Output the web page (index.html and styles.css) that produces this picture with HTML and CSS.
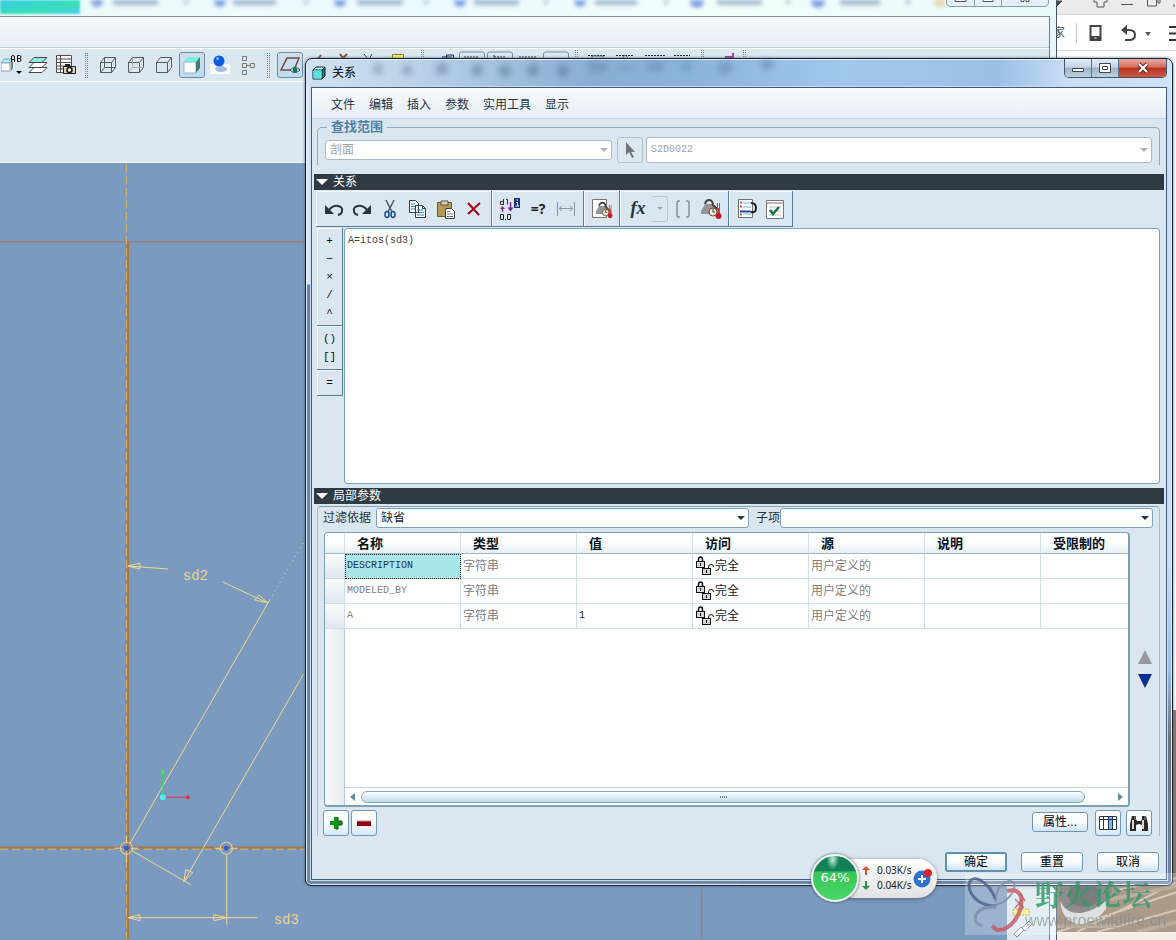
FILE: index.html
```html
<!DOCTYPE html>
<html lang="zh-CN">
<head>
<meta charset="utf-8">
<title>关系</title>
<link rel="stylesheet" href="styles.css">
</head>
<body>
<svg class="defs" aria-hidden="true">
  <symbol id="locks" viewBox="0 0 20 20">
    <g fill="none" stroke="#111">
      <path d="M3.500 6V3.500Q3.500 1 5.500 1Q7.500 1 7.500 3.500V6" stroke-width="1.500"/>
      <rect x="1.500" y="5.500" width="8" height="6" fill="#d5d5d5"/>
      <path d="M5.500 7v3M13.500 13v-2Q13.500 8.500 16 8.500Q18.500 8.500 18.500 11"/>
      <rect x="7.500" y="12.500" width="8" height="6" fill="#d5d5d5"/>
      <path d="M11.500 14v3"/>
    </g>
  </symbol>
  <symbol id="weight" viewBox="0 0 22 22">
    <path d="M1 13l4-7h7l4 7-2 3H1z" fill="#92969a"/>
    <path d="M5 6Q6 2 9 2t4 4" fill="none" stroke="#3c3c3c" stroke-width="2"/>
    <path d="M12 6l4 4v3" stroke="#5a3a26" stroke-width="2" fill="none"/>
    <circle cx="13" cy="14" r="4" fill="#f4ecd4" stroke="#6b4a35"/>
    <path d="M13 11v3h2" stroke="#333" fill="none"/>
    <path d="M18.500 5v12" stroke="#b34a4a" stroke-width="3"/><path d="M18.500 5v5" stroke="#fff"/>
    <circle cx="18.500" cy="18" r="3" fill="#c21d22"/>
  </symbol>
</svg>
<main class="desktop">

  <section class="app">
    <header class="app-title">
      <span class="app-accent"></span>
      <svg class="app-tabs" width="970" height="16" viewBox="0 0 970 16" aria-hidden="true">
        <g fill="#5279dd"><circle cx="17" cy="1" r="6"/><circle cx="140" cy="1" r="6"/><circle cx="260" cy="1" r="6"/><circle cx="380" cy="1" r="6"/><circle cx="500" cy="1" r="6"/><circle cx="617" cy="1" r="7"/><circle cx="738" cy="1" r="7"/><circle cx="860" cy="1" r="6" fill="#ebc078"/></g>
        <g fill="#7f99b8"><path d="M33 0h45v5H33zM153 0h43v5h-43zM277 0h46v5h-46zM394 0h45v5h-45zM515 0h42v5h-42zM637 0h45v5h-45zM760 0h40v5h-40zM104 0h4v4h-4zM224 0h4v4h-4zM344 0h4v4h-4zM464 0h4v4h-4zM584 0h4v4h-4zM706 0h4v4h-4zM826 0h4v4h-4z"/></g>
      </svg>
      <svg class="app-controls" width="104" height="8" viewBox="0 0 104 8" aria-hidden="true">
        <path d="M.5 0v2Q.5 6.500 5 6.500H98Q102.500 6.500 102.500 2V0M28.500 0v6M55.500 0v6" fill="#e3eff9" stroke="#8a9db3"/>
        <path d="M9 0v1.500h11V0M37 0v1.500h10V0M75 0v1.500h3V0M80 0v1.500h3V0" fill="#fff" stroke="#555"/>
      </svg>
    </header>
    <div class="app-frame">
      <div class="app-menu"></div>
      <div class="app-tools">
        <button class="tool tool-first" aria-label="注释"><svg width="22" height="22" viewBox="0 0 22 22"><path d="M0 9l3-4h8l-2 4z" fill="#9ff" stroke="#999"/><path d="M0 9h9v8H0z" fill="#fff" stroke="#99a"/><path d="M10 9l2-3v8l-2 3z" fill="#688"/><path d="M10.500 8V3q0-1.500 1.500-1.500T13.500 3v5M10.500 5.500h3M16.500 1.500v6h2q1.500 0 1.500-1.500t-1.500-1.500h-2 2q1.500 0 1.500-1.500t-1.500-1.500z" fill="none" stroke="#111"/><path d="M15 17h6l-3 3z" fill="#111"/></svg></button>
        <button class="tool" aria-label="层"><svg width="20" height="20" viewBox="0 0 20 20" fill="#fff" stroke="#444"><path d="M1 17.500l5-5h13l-5 5z"/><path d="M1 12.500l5-5h13l-5 5z"/><path d="M1 7.500l5-5h13l-5 5z" fill="#8fe9e4"/></svg></button>
        <button class="tool" aria-label="快照"><svg width="22" height="22" viewBox="0 0 22 22"><path d="M1.500 1.500h15v17h-15zM1.500 5h15M1.500 8.500h15M1.500 12h15M1.500 15h15M5.500 1.500v17" fill="#fff" stroke="#554848"/><path d="M8.500 12.500h12v7h-12z" fill="#ddd3b8" stroke="#222"/><path d="M10 10h5v2h-5z" fill="#222"/><circle cx="14.500" cy="16" r="2.500" fill="#fff" stroke="#111" stroke-width="1.500"/></svg></button>
        <span class="grip"></span>
        <button class="tool" aria-label="线框"><svg width="18" height="18" viewBox="0 0 18 18" fill="none" stroke="#555a60"><path d="M1.500 6.500h11v10h-11zM1.500 6.500l4-5h11v10l-4 5M12.500 6.500l4-5M5.500 1.500v10h11M5.500 11.500l-4 5"/></svg></button>
        <button class="tool" aria-label="隐藏线"><svg width="18" height="18" viewBox="0 0 18 18" fill="none" stroke="#555a60"><path d="M1.500 6.500h11v10h-11zM1.500 6.500l4-5h11v10l-4 5M12.500 6.500l4-5"/><path d="M5.500 1.500v10h11M5.500 11.500l-4 5" stroke="#aaa"/></svg></button>
        <button class="tool" aria-label="消隐"><svg width="18" height="18" viewBox="0 0 18 18" fill="none" stroke="#555a60"><path d="M1.500 6.500h11v10h-11zM1.500 6.500l4-5h11v10l-4 5M12.500 6.500l4-5"/></svg></button>
        <button class="tool on" aria-label="着色"><svg width="18" height="18" viewBox="0 0 18 18"><path d="M1 6l4-5h12l-4 5z" fill="#72eee3"/><path d="M1 6h12v11H1z" fill="#fcffff" stroke="#9bb"/><path d="M13 6l4-5v11l-4 5z" fill="#477773"/></svg></button>
        <button class="tool" aria-label="外观"><svg width="22" height="22" viewBox="0 0 22 22"><path d="M1 10h20v10H1z" fill="#fafdff"/><ellipse cx="12" cy="15" rx="6" ry="3" fill="#a9bce0"/><circle cx="10" cy="7" r="5.500" fill="#0b5ce0"/><circle cx="8.500" cy="4.500" r="1.500" fill="#7db8ff"/></svg></button>
        <button class="tool" aria-label="模型树"><svg width="18" height="20" viewBox="0 0 18 20" fill="none" stroke="#777"><path d="M3.500 1.500h4v4h-4zM3.500 8.500h4v4h-4zM3.500 15.500h4v4h-4zM11.500 8.500h4v4h-4zM8 10.500h3"/></svg></button>
        <span class="grip"></span>
        <button class="tool on" aria-label="基准平面"><svg width="22" height="22" viewBox="0 0 22 22"><path d="M2 16L8 4h12l-5 12z" fill="none" stroke="#70493e" stroke-width="1.500"/><path d="M11 16q5-5 10 0-5 5-10 0z" fill="#fff" stroke="#444"/><circle cx="16" cy="16" r="2.500" fill="#087a70"/></svg></button>
        <svg class="tool-rest" width="480" height="20" viewBox="304 50 480 20" fill="none" stroke="#333" aria-hidden="true">
          <path d="M317 60l4-5M340 54l3 4 4-4" stroke="#8a4a32" stroke-width="2"/><path d="M364 54l4 5M372 54l-3 5"/><path d="M392.500 60v-5.500h11V60" fill="#ffef6b" stroke="#877b22"/>
          <path d="M421.500 50v20M423.500 50v20M575.500 50v20M577.500 50v20M701.500 50v20M703.500 50v20M743.500 50v20M745.500 50v20" stroke="#7a8a9a" stroke-dasharray="1 1"/>
          <path d="M446.500 60v-5h7v5M442 57h10" stroke="#10205f"/>
          <path d="M459.500 62v-8q0-2 2-2h21q2 0 2 2v8M487.500 62v-8q0-2 2-2h21q2 0 2 2v8M543.500 62v-8q0-2 2-2h21q2 0 2 2v8" stroke="#778b9e"/>
          <path d="M464 57h14M494 55v4M494 57h12M519 57h17M588 55.500h18M616 55.500h17M645 55.500h20M674 55.500h16" stroke="#223" stroke-dasharray="2 1"/>
          <path d="M592 60v-4h11v4M621 60l4-5 5 5" stroke="#55666f"/><path d="M725 57h8M733 53v5" stroke="#b137a7" stroke-width="2"/>
        </svg>
      </div>
      <div class="app-panel"></div>
      <div class="app-view">
        <svg class="drawing" width="1008" height="776" viewBox="0 163 1008 776" role="img" aria-label="草绘">
          <g fill="none">
            <path d="M0 241.500H1008M702.500 241V940" stroke="#a5745c"/>
            <path d="M0 848.500H1008M127 241V940" stroke="#8f8480" stroke-width="3"/>
            <path d="M0 847.500H1008M128.500 241V940" stroke="#a9713a"/>
            <path d="M0 849.500H1008M126.500 164V940" stroke="#e3b45c" stroke-dasharray="8 4"/>
            <g stroke="#f2d98b">
              <path d="M130 844L270 600M304 674L184 882M132 851L191 885M227 855V925M128 918H258M128 566L168 569M223 582L268 603"/>
              <path d="M270 600L304 542" stroke-dasharray="1 4"/>
              <path d="M140 563l-12 3 12 3zM259 595l9 8-13-3zM186 870l-2 12 9-9zM140 915l-12 3 12 3zM214 915l13 3-13 3z"/>
              <circle cx="126.500" cy="848.500" r="6"/><circle cx="226.500" cy="848.500" r="6"/>
              <path d="M115 848.500h7M131 848.500h7M126.500 836v7M126.500 853v10M215 848.500h7M231 848.500h7"/>
            </g>
            <path d="M163 797V773" stroke="#35df55"/><path d="M163 797.500h25" stroke="#dd3344"/>
          </g>
          <circle cx="126.500" cy="848.500" r="2.500" fill="#315bd0"/><circle cx="226.500" cy="848.500" r="2.500" fill="#315bd0"/>
          <circle cx="163" cy="772" r="2" fill="#39e95a"/><circle cx="188" cy="797.500" r="2" fill="#ea3344"/><circle cx="163" cy="797.500" r="3" fill="#55effa"/>
          <text x="183" y="580" class="dim">sd2</text><text x="274" y="924" class="dim">sd3</text>
        </svg>
        <aside class="app-side"><svg width="42" height="56" viewBox="0 0 42 56" aria-hidden="true"><path d="M8 15l9 9M16 15l-8 9M13 9l5 8" stroke="#a44c42" stroke-width="1.500" fill="none"/><path d="M6 25h16v6H6z" fill="#ffed80" stroke="#ad933a" stroke-dasharray="2 1"/><path d="M7 50l7-7 3 3-7 7zM15 44l7-7 3 3-7 7z" fill="#fff" stroke="#7d888f"/></svg></aside>
      </div>
    </div>
  </section>

  <section class="browser">
    <div class="browser-top"><svg width="118" height="15" viewBox="0 0 118 15" fill="none" stroke="#555" aria-hidden="true"><path d="M0 1h5l-5 5" fill="#444"/><path d="M37 0v2h3v5h7V2h3V0M64 4.500h12M90.500 0v6h9V0M101 0v3h2V0M117 4v3"/></svg></div>
    <div class="browser-bar"><span>家</span><i></i><svg width="90" height="22" viewBox="0 0 90 22" fill="none" aria-hidden="true"><path d="M4.500 4h10v14h-10z" stroke="#444" stroke-width="2"/><path d="M4 15.500h11" stroke="#444" stroke-width="3"/><path d="M8.500 16h2" stroke="#fff"/><path d="M37 8h6q6 0 6 5t-6 5h-4" stroke="#444" stroke-width="2"/><path d="M41 3l-6 5 6 5z" fill="#444"/><path d="M59 10h6l-3 4z" fill="#555"/><path d="M83 5h8M83 11.500h8M83 18h8" stroke="#333" stroke-width="2"/></svg></div>
    <div class="browser-page"></div>
    <div class="photo"><svg width="120" height="222" viewBox="0 0 120 222" aria-hidden="true"><path d="M0 0h120v222H0z" fill="#8f7963"/><path d="M20 222L120 172M0 222L120 182M40 222l80-22M60 180l60-12" stroke="#c9b8a1" stroke-width="2"/><path d="M80 222l40-10M50 190l70-14M0 216h60" stroke="#a6927b" stroke-width="4"/><path d="M2 172h54l-3 20q-10 20-28 20Q6 208 2 192z" fill="#6a6866"/><path d="M3 190q5 14 21 13 14-2 27-14l-2 10q-12 15-27 15Q5 212 3 190z" fill="#d5d7d7"/><ellipse cx="27" cy="185" rx="16" ry="12" fill="#4e5156"/></svg></div>
    <div class="browser-foot"></div>
  </section>

  <section class="dialog" role="dialog" aria-labelledby="dlg-title">
    <header class="titlebar">
      <svg class="title-blur" width="500" height="28" viewBox="310 60 500 28" aria-hidden="true"><g fill="#34506e" opacity=".6"><circle cx="377" cy="69" r="5"/><circle cx="406" cy="70" r="5"/><circle cx="441" cy="69" r="6"/><circle cx="476" cy="70" r="6"/><circle cx="504" cy="71" r="6"/><circle cx="532" cy="70" r="6"/><circle cx="562" cy="71" r="6"/><path d="M588 62h18v10h-18zM616 66h16v3h-16zM646 62h16v9h-16z" opacity=".6"/><circle cx="685" cy="67" r="5" fill="#2f9173"/><circle cx="724" cy="68" r="7" opacity=".7"/><circle cx="766" cy="63" r="6"/></g></svg>
      <svg class="title-icon" width="14" height="14" viewBox="0 0 14 14"><path d="M1 4l3-3h9l-3 3z" fill="#aff"/><path d="M10 4l3-3v9l-3 3z" fill="#087"/><path d="M1 4h9v9H1zM1 4l3-3h9v9l-3 3M10 4l3-3" fill="none" stroke="#123"/><path d="M1.500 4.500h8v8h-8z" fill="#59e4df"/></svg>
      <h1 id="dlg-title">关系</h1>
      <div class="win-controls">
        <button class="win" aria-label="最小化"><svg width="14" height="12" viewBox="0 0 14 12"><path d="M1.500 6.500h11v3h-11z" fill="#fff" stroke="#445"/></svg></button>
        <button class="win" aria-label="最大化"><svg width="14" height="12" viewBox="0 0 14 12"><path d="M1.500 1.500h11v9h-11zM4.500 4.500h5v3h-5z" fill="#fff" stroke="#445"/></svg></button>
        <button class="win close" aria-label="关闭"><svg width="14" height="12" viewBox="0 0 14 12"><path d="M3 2l8 8M11 2l-8 8" stroke="#5a2828" stroke-width="4"/><path d="M3 2l8 8M11 2l-8 8" stroke="#fff" stroke-width="2"/></svg></button>
      </div>
    </header>

    <div class="body">
      <nav class="menubar">
        <button>文件</button><button>编辑</button><button>插入</button><button>参数</button><button>实用工具</button><button>显示</button>
      </nav>

      <fieldset class="scope">
        <legend>查找范围</legend>
        <div class="scope-row">
          <span class="combo scope-type off"><select aria-label="对象类型" disabled><option>剖面</option></select></span>
          <button class="square off" aria-label="选取"><svg width="14" height="18" viewBox="0 0 14 18"><path d="M3 1v13l3-3 3 6 2-1-3-5h4z" fill="#6e7378"/></svg></button>
          <span class="combo scope-name off"><select class="mono" aria-label="对象名称" disabled><option>S2D0022</option></select></span>
        </div>
      </fieldset>

      <h2 class="bar"><span class="tri"></span>关系</h2>
      <div class="tools">
        <div class="group">
          <button aria-label="撤消"><svg width="20" height="18" viewBox="0 0 20 18"><path d="M5 10q4-5 9-4t4 5q0 3-4 4" fill="none" stroke="#2d3338" stroke-width="2"/><path d="M1 5v9h9z" fill="#2d3338"/></svg></button>
          <button aria-label="重做"><svg width="20" height="18" viewBox="0 0 20 18"><path d="M15 10q-4-5-9-4t-4 5q0 3 4 4" fill="none" stroke="#2d3338" stroke-width="2"/><path d="M19 5v9h-9z" fill="#2d3338"/></svg></button>
          <button aria-label="剪切"><svg width="20" height="20" viewBox="0 0 20 20" fill="none" stroke-width="1.500"><path d="M6 1l6 12M14 1L8 13" stroke="#555"/><ellipse cx="7" cy="15.500" rx="2" ry="3" stroke="#17468c"/><ellipse cx="13" cy="15.500" rx="2" ry="3" stroke="#17468c"/></svg></button>
          <button aria-label="复制"><svg width="20" height="20" viewBox="0 0 20 20"><path d="M1.500 1.500h6l3 3v9h-9zM7.500 6.500h7l3 3v9h-10z" fill="#fff" stroke="#2b3d54"/><path d="M3 5h4M3 7.500h4M3 10h4M9 11h6M9 13.500h7M9 16h7" stroke="#357baf"/><path d="M14.500 6.500v3h3" fill="none" stroke="#2b3d54"/></svg></button>
          <button aria-label="粘贴"><svg width="20" height="20" viewBox="0 0 20 20"><path d="M1.500 3.500h14v14h-14z" fill="#b69a5a" stroke="#6d5a35"/><path d="M5 2h7v4H5z" fill="#d7d3b2" stroke="#555"/><path d="M9.500 9.500h6l3 3v7h-9z" fill="#fff" stroke="#444"/><path d="M11 12.500h3M11 15h6M11 17.500h6" stroke="#777"/></svg></button>
          <button aria-label="删除"><svg width="18" height="18" viewBox="0 0 18 18"><path d="M3 3l11 12M15 3L3 14" fill="none" stroke="#a50019" stroke-width="2"/></svg></button>
        </div>
        <div class="group">
          <button aria-label="切换尺寸"><svg width="24" height="24" viewBox="0 0 24 24" fill="none"><path d="M5.500 2v6M5.500 4.500h-3v3h3M8 2.500h1.500v5" stroke="#333"/><path d="M4.500 11v4M12.500 5v7" stroke="#82239d" stroke-width="1.500"/><path d="M2 12l2.500-3L7 12zM9.500 10.500l3 4 3-4z" fill="#82239d"/><path d="M16 1h6v10h-6z" fill="#1b327c"/><path d="M18 5.500h1.500v3M17.500 9h3.500M18.500 3h1.500" stroke="#fff"/><path d="M2.500 17.500h3v5h-3zM7 22.500h1M9.500 17.500h3v5h-3z" stroke="#222"/></svg></button>
          <button class="eval" aria-label="计算">=?</button>
          <button aria-label="尺寸"><svg width="20" height="18" viewBox="0 0 20 18" fill="none" stroke="#8a959d"><path d="M1.500 2v14M18.500 2v14M3 8.500h14M6 6L3 8.500 6 11M14 6l3 2.500-3 2.500"/></svg></button>
        </div>
        <div class="group">
          <button aria-label="设置单位"><svg width="22" height="22" viewBox="0 0 22 22"><path d="M1.500 1.500h14v18h-14z" fill="#fff" stroke="#777"/></svg><svg class="stacked" width="18" height="18"><use href="#weight"/></svg></button>
        </div>
        <div class="group">
          <button class="fx" aria-label="函数">fx</button>
          <button class="drop" aria-label="函数列表"></button>
          <button aria-label="括号"><svg width="18" height="20" viewBox="0 0 18 20" fill="none" stroke="#84929b" stroke-width="1.500"><path d="M6 2H4.500Q3 2 3 4v12q0 2 1.500 2H6M12 2h1.500Q15 2 15 4v12q0 2-1.500 2H12"/></svg></button>
          <button aria-label="单位"><svg width="22" height="22"><use href="#weight"/></svg></button>
        </div>
        <div class="group">
          <button aria-label="排序"><svg width="22" height="22" viewBox="0 0 22 22"><path d="M2.500 1.500h14v18h-14z" fill="#fff" stroke="#68717d"/><path d="M7 5h8M7 9h8M7 16h8" stroke="#79aee0"/><path d="M4 4.500h2M4 8.500h2M4 16.500h2" stroke="#d65332" stroke-width="2"/><path d="M4 13.500h11" stroke="#1c488f" stroke-width="2"/><path d="M15 5q5 0 5 5t-5 4" fill="none" stroke="#222" stroke-width="2"/></svg></button>
          <button aria-label="校验"><svg width="20" height="20" viewBox="0 0 20 20"><path d="M1.500 1.500h17v18h-17z" fill="#fff" stroke="#777"/><path d="M2 4h16" stroke="#9a6073"/><path d="M4 8h12M4 12h12M4 16h12" stroke="#b6c2c8"/><path d="M5 11l3 4 6-7" fill="none" stroke="#1a7340" stroke-width="2.500"/></svg></button>
        </div>
      </div>

      <div class="editor">
        <div class="ops">
          <div><button>+</button><button>−</button><button>×</button><button>/</button><button>^</button></div>
          <div><button>()</button><button>[]</button></div>
          <div><button>=</button></div>
        </div>
        <textarea class="mono" aria-label="关系式" spellcheck="false">A=itos(sd3)</textarea>
      </div>

      <h2 class="bar"><span class="tri"></span>局部参数</h2>
      <div class="params">
        <div class="filter">
          <label for="filter-by">过滤依据</label>
          <span class="combo"><select id="filter-by"><option>缺省</option></select></span>
          <label for="sub-item" class="sub">子项</label>
          <span class="combo"><select id="sub-item"><option></option></select></span>
        </div>
        <div class="grid-row">
          <div class="grid">
            <div class="grid-body">
              <table>
                <colgroup><col class="c-head"><col class="c"><col class="c"><col class="c"><col class="c"><col class="c"><col class="c"><col></colgroup>
                <thead><tr><th></th><th>名称</th><th>类型</th><th>值</th><th>访问</th><th>源</th><th>说明</th><th>受限制的</th></tr></thead>
                <tbody>
                  <tr><td></td><td class="mono selected">DESCRIPTION</td><td>字符串</td><td class="mono val"></td><td class="access"><svg width="20" height="20"><use href="#locks"/></svg>完全</td><td>用户定义的</td><td></td><td></td></tr>
                  <tr><td></td><td class="mono">MODELED_BY</td><td>字符串</td><td class="mono val"></td><td class="access"><svg width="20" height="20"><use href="#locks"/></svg>完全</td><td>用户定义的</td><td></td><td></td></tr>
                  <tr><td></td><td class="mono">A</td><td>字符串</td><td class="mono val">1</td><td class="access"><svg width="20" height="20"><use href="#locks"/></svg>完全</td><td>用户定义的</td><td></td><td></td></tr>
                </tbody>
              </table>
            </div>
            <div class="hscroll"><span class="arrow left"></span><span class="thumb"><i></i></span><span class="arrow right"></span></div>
          </div>
          <div class="reorder">
            <button aria-label="上移"><svg width="14" height="14" viewBox="0 0 14 14"><path d="M7 0l7 14H0z" fill="#949a9f"/></svg></button>
            <button aria-label="下移"><svg width="14" height="14" viewBox="0 0 14 14"><path d="M0 0h14L7 14z" fill="#0a2f91"/></svg></button>
          </div>
        </div>
        <div class="grid-actions">
          <button class="square" aria-label="添加参数"><svg width="14" height="14" viewBox="0 0 14 14"><path d="M5 1h4v4h4v4H9v4H5V9H1V5h4z" fill="#0c9413"/><path d="M9 1v4h4v4H9v4H7" fill="none" stroke="#075b12"/></svg></button>
          <button class="square" aria-label="删除参数"><svg width="14" height="14" viewBox="0 0 14 14"><path d="M0 5h14v5H0z" fill="#91000d"/><path d="M0 5h14" stroke="#d68a92"/></svg></button>
          <button class="push props">属性...</button>
          <button class="square cols" aria-label="列"><svg width="18" height="16" viewBox="0 0 18 16"><path d="M.5 1.500h17v13H.5z" fill="#fff"/><path d="M9 2h5v12H9z" fill="#73baf0"/><path d="M.5 1.500h17v13H.5zM.5 4.500h17M4.500 1.500v13M9.500 1.500v13M13.500 1.500v13" fill="none" stroke="#273451"/></svg></button>
          <button class="square" aria-label="查找"><svg width="20" height="18" viewBox="0 0 20 18"><path d="M3 2h4v3l1 2h4l1-2V2h4l2 8v7h-6v-6l-3-1-3 1v6H1v-7z" fill="#2a2726"/><path d="M4 6v9M14 6v9" stroke="#d8d8d8" stroke-width="2"/><path d="M6 2v4M16 2v4" stroke="#888"/></svg></button>
        </div>
      </div>
      <footer class="actions">
        <button class="push primary">确定</button><button class="push">重置</button><button class="push">取消</button>
      </footer>
    </div>
  </section>

  <div class="watermark">
    <svg width="80" height="60" viewBox="0 0 80 60" fill="none" aria-hidden="true"><path d="M31 27Q25 12 15 7 5 3 4 12q0 9 9 16 8 5 18 5" stroke="#4b5f89" stroke-width="3"/><path d="M31 30Q30 12 44 8q9 0 3 12-5 9-16 12" stroke="#7d8cab" stroke-width="2"/><path d="M31 34q-13-1-19 6-5 10 5 13" stroke="#7d8cab" stroke-width="3"/><path d="M42 18q11-3 14 6 2 12-6 23-8 11-18 10l-5-4" stroke="#c65565" stroke-width="4"/></svg>
    <div class="wm-text"><strong>野火论坛</strong><span>www.proewildfire.cn</span></div>
  </div>

  <div class="monitor">
    <div class="orb">64%</div>
    <div class="rates">
      <p><svg width="8" height="10" viewBox="0 0 8 10"><path d="M4 0L0 4h3v5h2V4h3z" fill="#d8542c"/></svg>0.03K/s</p>
      <p><svg width="8" height="10" viewBox="0 0 8 10"><path d="M4 9L0 5h3V0h2v5h3z" fill="#25934c"/></svg>0.04K/s</p>
    </div>
    <button class="boost" aria-label="加速"><svg width="20" height="20" viewBox="0 0 20 20"><circle cx="9" cy="11" r="8.500" fill="#2c72cf"/><path d="M9 7v8M5 11h8" stroke="#fff" stroke-width="2"/><circle cx="15" cy="5" r="4" fill="#d7282f"/></svg></button>
  </div>
</main>
</body>
</html>
```
FILE: styles.css
```css
* { box-sizing: border-box; }
body { margin: 0; font: 12px/16px "Liberation Sans", "Noto Sans CJK SC", sans-serif; color: #26323c; }
button, select, textarea { font: inherit; color: inherit; margin: 0; }
button { padding: 0; border: 0; background: none; display: flex; align-items: center; justify-content: center; }
h1, h2, p { margin: 0; font-size: 12px; font-weight: normal; }
svg { flex: none; }
.defs { display: none; }
.desktop { position: relative; height: 100vh; min-height: 760px; overflow: hidden; background: #fff; }

/* background application */
.app { position: absolute; inset: 0 119px 0 0; display: flex; flex-direction: column; background: #e9f5fc; border-right: 1px solid #46535f; }
.app-title { display: flex; height: 16px; flex: none; overflow: hidden; background: linear-gradient(90deg, #eefafa, #eafbff 40%, #f2fffb 70%, #e8fafb); position: relative; }
.app-accent { width: 80px; height: 14px; background: linear-gradient(170deg, #36d0d8 20%, #38dfb8 60%, #54cff1); filter: blur(1px); }
.app-tabs { filter: blur(2px); opacity: .7; }
.app-controls { position: absolute; top: 0; right: 6px; }
.app-frame { flex: 1; display: flex; flex-direction: column; margin-right: 6px; border-top: 1px solid #7f8fa2; border-right: 1px solid #6e8090; min-height: 0; }
.app-menu { height: 31px; flex: none; background: linear-gradient(#f4f9fd, #e5edf5); border-bottom: 1px solid #bccbd6; }
.app-tools { height: 33px; flex: none; display: flex; align-items: center; background: #dce8f0; border-top: 1px solid #fff; overflow: hidden; }
.tool { width: 26px; height: 26px; margin: 0 1px; flex: none; border-radius: 3px; }
.tool-first { width: 22px; }
.tool.on { border: 1px solid #71889e; background: linear-gradient(#d0e0eb, #bddcf2); }
.grip { width: 14px; height: 27px; flex: none; background: repeating-linear-gradient(#dce8f0 0 1px, transparent 1px 2px), linear-gradient(90deg, transparent 5px, #75828e 5px 6px, transparent 6px 7px, #75828e 7px 8px, transparent 8px); }
.tool-rest { align-self: flex-start; margin-top: 1px; }
.app-panel { height: 82px; flex: none; background: #dbe8f1; border-top: 1px solid #fff; border-bottom: 1px solid #f2f8fb; }
.app-view { flex: 1; display: flex; min-height: 0; background: #7b9abf; overflow: hidden; }
.drawing { flex: 1 1 0; min-width: 0; overflow: hidden; }
.dim { font: 14px "Liberation Mono", monospace; fill: #eed38b; }
.app-side { width: 42px; flex: none; display: flex; align-items: flex-end; background: #dae7f0; }

/* background browser */
.browser { position: absolute; inset: 0 0 0 auto; width: 119px; display: flex; flex-direction: column; background: #fff; }
.browser-top { height: 15px; background: #ebebeb; border-bottom: 1px solid #d5d5d5; }
.browser-top svg, .photo svg { display: block; }
.browser-bar { height: 36px; display: flex; align-items: center; border-bottom: 1px solid #ddd5d5; overflow: hidden; }
.browser-bar span { width: 8px; display: flex; justify-content: flex-end; overflow: hidden; color: #555; }
.browser-bar i { width: 1px; height: 20px; margin: 0 9px 0 11px; background: #ccc; }
.browser-page { flex: 1; }
.photo { height: 222px; overflow: hidden; }
.browser-foot { height: 8px; background: #f3ebe4; }

/* dialog */
.dialog { position: absolute; inset: 58px 3px 54px 305px; display: flex; flex-direction: column; padding: 0 5px 5px; border: 1px solid #172333; border-radius: 7px 7px 6px 6px; box-shadow: inset 0 0 0 1px #e2effb, 0 0 3px #4c6177;
  background: linear-gradient(90deg, #d0e2f4, #bcd3ea 12%, #89aed3 33%, #8db3dc 45%, #a2c7ed 62%, #9cc0e5 80%, #c8def4 88%, #cfe3f8) 0 0 / 100% 29px no-repeat, linear-gradient(#dde4f3 225px, #6286b0 226px, #7089a6) 0 0 / 50% 100% no-repeat, linear-gradient(#c8dcf6 500px, #9bbde7 610px, #69727d 680px, #6c85a6) 100% 0 / 50% 100% no-repeat; }
.titlebar { position: relative; height: 28px; flex: none; display: flex; align-items: flex-start; padding-left: 1px; }
.title-blur { position: absolute; left: 0; top: 1px; filter: blur(3px); opacity: .6; }
.title-icon { margin-top: 7px; position: relative; }
.titlebar h1 { margin: 6px 0 0 6px; color: #000; position: relative; }
.win-controls { margin-left: auto; display: flex; border: 1px solid #42536a; border-top: 0; border-radius: 0 0 5px 5px; overflow: hidden; }
.win { width: 27px; height: 18px; background: linear-gradient(#e3edf6, #c7d6e5 45%, #9fb3c8 50%, #bdd0e3); border-right: 1px solid #5e7085; }
.win.close { width: 47px; border-right: 0; background: linear-gradient(#e8aaa0, #d4705f 45%, #b8321d 50%, #cf5a45); }

.body { flex: 1; display: flex; flex-direction: column; min-height: 0; padding: 0 2px 7px; border: 1px solid #3f5c7b; box-shadow: 0 0 0 1px #c8dbea; background: #dae7f0; }
.menubar { display: flex; gap: 14px; height: 31px; flex: none; margin: 0 -2px; padding: 3px 19px 0; border-bottom: 1px solid #bcd0dd; background: linear-gradient(#f7fbfe, #e6eef6); }
.scope { margin: 0 4px 9px 3px; padding: 2px 7px; border: 1px solid #8eabc2; border-bottom: 0; border-radius: 5px 5px 0 0; min-width: 0; flex: none; }
.scope legend { margin-left: 2px; padding: 0 4px; line-height: 16px; font-size: 13px; font-weight: bold; color: #4f7fa8; }
.combo { position: relative; display: flex; flex: 1; height: 20px; min-width: 0; }
.combo::after { content: ""; position: absolute; right: 4px; top: 50%; margin-top: -2px; border: 4px solid transparent; border-top-color: #26323c; border-bottom: 0; pointer-events: none; }
.combo select { appearance: none; width: 100%; padding: 0 16px 0 4px; border: 1px solid #7ea2b9; border-radius: 3px; background: #fff; color: #1e2a33; opacity: 1; }
.combo.off::after { border-top-color: #adb5ba; }
.combo.off select { border-color: #adbac3; color: #a0a5a8; }
.scope-row { display: flex; align-items: center; height: 26px; }
.combo.scope-type { flex: 0 1 287px; }
.scope-row .square { margin: 0 3px 0 5px; }
.combo.scope-name { height: 26px; }
.mono, .combo .mono { font-family: "Liberation Mono", monospace; font-size: 10px; }

.bar { display: flex; align-items: center; height: 16px; flex: none; background: #303a42; color: #fff; }
.tri { margin: 0 5px 0 2px; border: 6px solid transparent; border-top-color: #fff; border-bottom: 0; }
.tools { display: flex; height: 36px; flex: none; margin: 1px 0 0 2px; }
.group { display: flex; align-items: center; padding: 0 3px 0 4px; border-right: 1px solid #55809c; border-bottom: 1px solid #55809c; box-shadow: inset 1px 1px #f5fbff; }
.group button { position: relative; width: 28px; height: 28px; }
.stacked { position: absolute; left: 7px; top: 6px; }
.group .eval { font: bold 14px "Noto Sans", sans-serif; color: #222; }
.group .fx { font: italic bold 18px "Liberation Serif", serif; }
.group .drop { width: 16px; height: 26px; margin-right: 1px; border: 1px solid #b5c3cd; border-left: 0; border-radius: 0 3px 3px 0; }
.drop::after { content: ""; border: 3px solid transparent; border-top-color: #9ba6ae; border-bottom: 0; }

.editor { flex: 1 1 256px; min-height: 180px; display: flex; margin: 1px 4px 4px 3px; gap: 1px; }
.ops { width: 26px; align-self: flex-start; border-right: 1px solid #55809c; }
.ops div { padding: 4px 0 3px; border-bottom: 1px solid #55809c; box-shadow: inset 1px 1px #f5fbff; }
.ops button { width: 25px; height: 18px; font: 11px "Liberation Mono", monospace; color: #111; }
.editor textarea { flex: 1; resize: none; padding: 5px 3px; border: 1px solid #7aa6b4; border-radius: 3px; background: #fff; line-height: 14px; color: #444; outline: 0; }

.params { flex: 1 1 331px; min-height: 230px; display: flex; flex-direction: column; margin: 2px 4px 0 3px; padding: 1px 0 0 5px; border: 1px solid #a2bccd; border-bottom: 0; border-top-color: #7fa2b6; border-radius: 4px 4px 0 0; }
.filter { display: flex; align-items: center; height: 20px; flex: none; padding-right: 6px; }
.filter label { margin-right: 5px; }
.filter .sub { margin: 0 0 0 7px; }
.grid-row { flex: 1; display: flex; min-height: 0; margin-top: 4px; }
.grid { flex: 1; min-width: 0; display: flex; flex-direction: column; border: 1px solid #7d9fb4; border-width: 1px 2px 2px 1px; border-radius: 4px; margin-left: 1px; overflow: hidden; background: linear-gradient(90deg, #f8fafb, #e4ebef 19px, #b7c9d3 19px 20px, #fff 20px); }
.grid-body { flex: 1; overflow: hidden; }
table { width: 100%; table-layout: fixed; border-collapse: separate; border-spacing: 0; }
.c-head { width: 20px; }
.c { width: 116px; }
th { height: 21px; padding: 2px 12px 0; text-align: left; line-height: 18px; font-size: 13px; color: #07121a; white-space: nowrap; border-right: 1px solid #d3dfe7; border-bottom: 1px solid #9fb7c8; background: linear-gradient(#fff 40%, #e8f0f5); }
th:last-child, td:last-child { border-right: 0; }
td { height: 25px; padding: 1px 3px 0 2px; line-height: 16px; color: #808080; white-space: nowrap; border-right: 1px solid #cfdfe8; border-bottom: 1px solid #cfdfe8; }
td:first-child { background: linear-gradient(#fafcfd, #dfe8ee); }
td.selected { background: #a9e6ea; color: #24313a; border: 1px dotted #222; padding: 0 1px; }
td.val, td.access { color: #222; }
.access svg { float: left; }
td.access { line-height: 20px; }
.hscroll { display: flex; align-items: center; height: 18px; flex: none; margin-left: 20px; padding: 0 5px; border-top: 1px solid #c5d6df; background: #fff; }
.thumb { flex: 1; height: 12px; margin: 0 33px 0 6px; display: flex; align-items: center; justify-content: center; border: 1px solid #86a8c3; border-radius: 6px; background: linear-gradient(#fff, #bed8eb); }
.thumb i { width: 7px; height: 2px; background: repeating-linear-gradient(90deg, #607585 0 1px, transparent 1px 2px); }
.arrow { border: 4px solid transparent; }
.arrow.left { border-right: 5px solid #66899b; border-left: 0; }
.arrow.right { border-left: 5px solid #66899b; border-right: 0; }
.reorder { width: 29px; display: flex; flex-direction: column; align-items: center; justify-content: center; gap: 10px; }
.grid-actions { display: flex; gap: 2px; align-items: center; height: 26px; flex: none; margin: 3px 7px 0 0; }
.square { width: 26px; height: 26px; flex: none; border: 1px solid #7397b3; border-radius: 3px; background: linear-gradient(#fff, #fafdff 50%, #d2e7f5); }
.square.off { border-color: #b2c1cc; background: #dde9f1; }
.push { width: 62px; height: 20px; border: 1px solid #7397b3; border-radius: 3px; background: linear-gradient(#fff, #f7fbfe 50%, #cfe4f3); color: #000; }
.push.primary { border: 2px solid #5f93ad; }
.props { width: 56px; margin: 0 5px 2px auto; }
.cols { margin-right: 3px; }
.actions { display: flex; justify-content: flex-end; gap: 14px; flex: none; margin: 16px 5px 0 0; }

/* overlays */
.monitor { position: absolute; left: 811px; bottom: 38px; display: flex; align-items: center; }
.monitor::before { content: ""; position: absolute; inset: 5px 0 4px 24px; border-radius: 20px; background: linear-gradient(#fff, #e2e2e4); box-shadow: 0 1px 4px #445a; }
.orb { position: relative; width: 48px; height: 48px; border: 2px solid #f1f5f1; border-radius: 50%; background: radial-gradient(ellipse at 45% 8%, #c5efdc 0, transparent 18%), linear-gradient(#138158 34%, #36c556 36%, #4bd86a); box-shadow: 0 0 3px #345; color: #fff; font: 13px/44px "DejaVu Sans", sans-serif; text-align: center; }
.rates { position: relative; padding-left: 3px; color: #222; font: 10px/15px "Noto Sans", sans-serif; }
.rates p { display: flex; align-items: center; gap: 7px; font-size: 10px; }
.boost { position: relative; margin: 0 4px 0 1px; }
.watermark { position: absolute; right: 0; bottom: 5px; width: 211px; height: 62px; display: flex; background: #ffffff40; }
.watermark svg { opacity: .8; }
.wm-text { position: absolute; left: 60px; top: 6px; white-space: nowrap; }
.wm-text strong { display: block; padding-left: 10px; font: bold 29px/30px "Noto Serif CJK SC", "Noto Sans CJK SC", serif; color: #38986c; opacity: .85; }
.wm-text span { display: block; font: 16px/24px "Liberation Sans", sans-serif; color: #7f8f8e; opacity: .65; }
```
